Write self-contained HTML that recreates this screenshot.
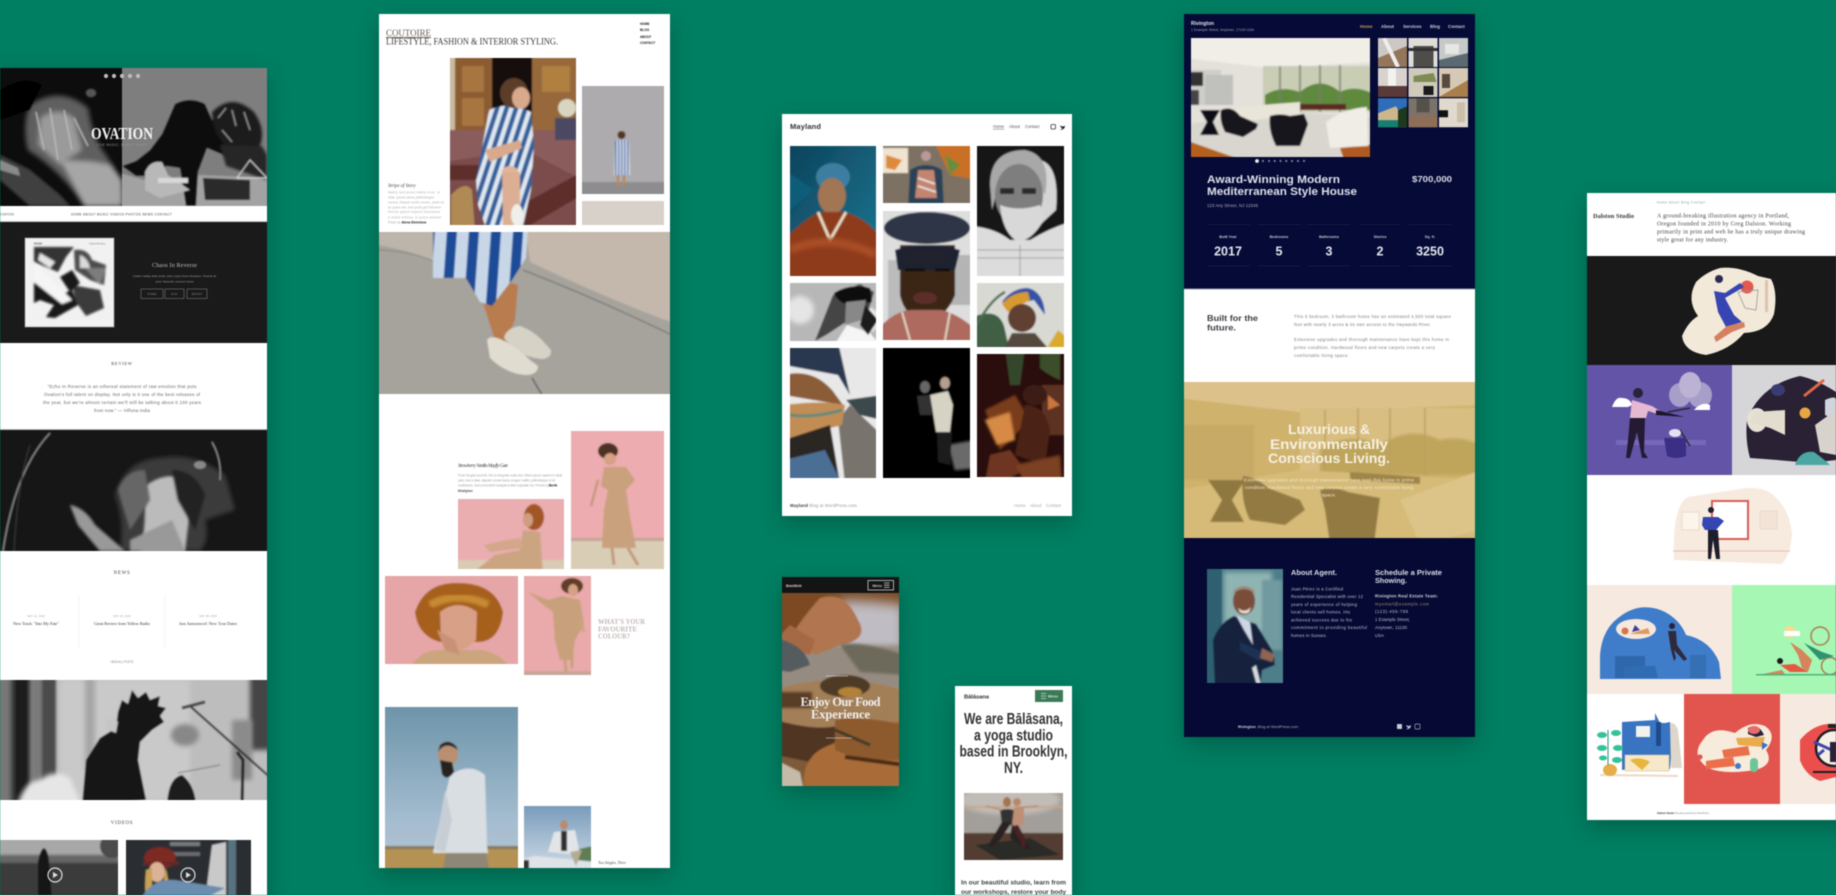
<!DOCTYPE html>
<html lang="en">
<head>
<meta charset="utf-8">
<title>Theme showcase</title>
<style>
html,body{margin:0;padding:0;background:#007f62;width:1836px;height:895px;overflow:hidden}
svg{display:block;position:absolute;left:0;top:0}
text{font-family:"Liberation Sans",sans-serif}
.s{font-family:"Liberation Serif",serif}
.soft{filter:blur(.45px)}
</style>
</head>
<body>
<svg class="soft" width="1836" height="895" viewBox="0 0 1836 895" xmlns="http://www.w3.org/2000/svg">
<defs>
<filter id="sh" x="-30%" y="-30%" width="160%" height="160%"><feGaussianBlur stdDeviation="12"/></filter>
<filter id="p" x="-10%" y="-10%" width="120%" height="120%"><feGaussianBlur stdDeviation=".9"/></filter>
<filter id="b1" x="-30%" y="-30%" width="160%" height="160%"><feGaussianBlur stdDeviation="1"/></filter>
<filter id="b2" x="-40%" y="-40%" width="180%" height="180%"><feGaussianBlur stdDeviation="2.5"/></filter>
<filter id="b5" x="-60%" y="-60%" width="220%" height="220%"><feGaussianBlur stdDeviation="6"/></filter>
<pattern id="st" width="9" height="9" patternUnits="userSpaceOnUse" patternTransform="rotate(18)"><rect width="9" height="9" fill="#dfe7f0"/><rect width="4.5" height="9" fill="#35609a"/></pattern>
<pattern id="st2" width="22" height="22" patternUnits="userSpaceOnUse" patternTransform="rotate(4)"><rect width="22" height="22" fill="#c8d7e8"/><rect width="10" height="22" fill="#1f4c97"/></pattern>
<pattern id="st3" width="3" height="3" patternUnits="userSpaceOnUse"><rect width="3" height="3" fill="#dfe7f0"/><rect width="1.5" height="3" fill="#3d66a6"/></pattern>
<linearGradient id="skyM" x1="0" y1="0" x2="0" y2="1"><stop offset="0" stop-color="#6b92a8"/><stop offset=".7" stop-color="#a5bdd0"/><stop offset="1" stop-color="#b4c4cf"/></linearGradient>
<linearGradient id="skyS" x1="0" y1="0" x2="0" y2="1"><stop offset="0" stop-color="#7296b8"/><stop offset="1" stop-color="#d3dfe8"/></linearGradient>
<linearGradient id="teal" x1="0" y1="0" x2="1" y2="1"><stop offset="0" stop-color="#0c4058"/><stop offset="1" stop-color="#1d7c98"/></linearGradient>
</defs>

<rect width="1836" height="895" fill="#007f62"/>

<!-- shadows -->
<g fill="#000" opacity=".24" filter="url(#sh)">
<rect x="-20" y="75" width="287" height="840"/>
<rect x="379" y="22" width="291" height="854"/>
<rect x="782" y="122" width="290" height="402"/>
<rect x="782" y="585" width="117" height="209"/>
<rect x="955" y="694" width="117" height="220"/>
<rect x="1184" y="22" width="291" height="723"/>
<rect x="1587" y="200" width="270" height="628"/>
</g>

<!-- ============ OVATION ============ -->
<rect x="0" y="68" width="267" height="827" fill="#fff"/>
<svg x="0" y="68" width="122" height="138" viewBox="0 68 122 138"><g filter="url(#p)">
<rect x="-6" y="62" width="134" height="150" fill="#0e0e0e"/>
<path d="M30 105Q60 85 88 108Q92 135 102 150Q122 175 122 206L85 206Q60 170 28 150Q22 125 30 105Z" fill="#5f5f5f" filter="url(#b2)"/>
<path d="M40 118Q58 105 74 118L82 150L60 165L38 145Z" fill="#9a9a9a" filter="url(#b2)"/>
<path d="M36 112L44 150M50 108L58 160M64 110L72 150M74 118L88 146" stroke="#c2c2c2" stroke-width="1.200" fill="none"/>
<path d="M60 160Q95 160 110 165L122 180L122 206L85 206Z" fill="#a6a6a6" filter="url(#b2)"/>
<path d="M0 155L30 170L60 195L70 206L30 206L0 180Z" fill="#3f3f3f" filter="url(#b1)"/>
<path d="M0 160L18 168L20 176L0 170Z" fill="#8a8a8a"/>
<ellipse cx="91" cy="93" rx="5" ry="4" fill="#555"/>
<path d="M0 90Q25 74 42 85L30 110L0 120Z" fill="#050505"/>
</g></svg>
<svg x="122" y="68" width="145" height="138" viewBox="122 68 145 138"><g filter="url(#p)">
<rect x="116" y="62" width="157" height="150" fill="#7e7e7e"/>
<path d="M116 172L145 180L200 175L273 178L273 212L116 212Z" fill="#a2a2a2"/>
<path d="M175 104Q190 96 205 104L212 120Q222 118 228 128L243 142L250 152L226 156L207 148L198 172L196 206L186 206L180 168L166 166L152 176L136 176L122 166L136 161L150 150L162 134Z" fill="#0d0d0d"/>
<path d="M212 112Q232 92 254 112Q268 132 258 150Q238 158 224 144Q212 130 212 112Z" fill="#1b1b1b" filter="url(#b1)"/>
<path d="M218 118L226 108M232 110L236 126M244 112L250 130M222 130L232 142" stroke="#9a9a9a" stroke-width="1.300" fill="none"/>
<path d="M220 145L262 146L267 155L267 180L226 166Z" fill="#252525" filter="url(#b1)"/>
<path d="M203 178L250 180L250 200L205 200Z" fill="#2c2c2c"/>
<path d="M145 172Q150 160 162 162L168 175L190 190L160 198L145 190Z" fill="#b8b8b8"/>
<path d="M250 160L267 178L237 178Z" fill="none" stroke="#e0e0e0" stroke-width="1"/>
<rect x="158" y="178" width="30" height="5" fill="#d8d8d8"/>
</g></svg>
<g fill="#bdbdbd"><circle cx="106" cy="76" r="2.1"/><circle cx="114" cy="76" r="2.1"/><circle cx="122" cy="76" r="2.1"/><circle cx="130" cy="76" r="2.1"/><circle cx="138" cy="76" r="2.1"/></g>
<text class="s" x="91" y="139" font-size="16.4" font-weight="700" fill="#f4f4f4" textLength="62" lengthAdjust="spacingAndGlyphs">OVATION</text>
<text x="122" y="146" font-size="3.2" fill="#9a9a9a" text-anchor="middle" letter-spacing=".4">LIVE MUSIC, EVERY NIGHT</text>
<rect x="0" y="206" width="267" height="16" fill="#fff"/>
<rect x="0" y="221" width="267" height="1" fill="#ccc"/>
<text x="0" y="215.500" font-size="3.2" fill="#666">OVATION</text>
<text x="71" y="215.500" font-size="3.2" fill="#444" textLength="101" lengthAdjust="spacing" letter-spacing=".3">HOME  ABOUT  MUSIC  VIDEOS  PHOTOS  NEWS  CONTACT</text>

<rect x="0" y="222" width="267" height="121" fill="#1a1a1a"/>
<rect x="25" y="238" width="89" height="89" fill="#f1f1f1" stroke="#999" stroke-width=".7"/>
<text x="34" y="244.500" font-size="2.8" fill="#555" font-weight="700">ECHO</text>
<text x="89" y="244.500" font-size="2.4" fill="#888">Chaos Reverse</text>
<g filter="url(#b1)" opacity=".95">
<path d="M34 247H74L66 257L58 272L34 262Z" fill="#2a2a2a"/>
<path d="M74 250Q88 248 92 260L106 265L104 285L90 280L75 270Z" fill="#444"/>
<path d="M40 253L55 262L50 268L38 260Z" fill="#e5e5e5"/>
<path d="M80 255Q88 258 90 268L80 268Z" fill="#d9d9d9"/>
<path d="M34 280L60 295L72 290L78 305L55 318L46 317L54 305L40 300L34 303Z" fill="#111"/>
<path d="M72 285L100 290L104 308L86 316L76 302Z" fill="#333"/>
<path d="M60 277L72 270L80 283L70 292Z" fill="#111"/>
<path d="M85 268L106 268L100 285Z" fill="#777"/>
<path d="M34 262L72 300L62 304L34 282Z" fill="#f6f6f6"/>
</g>
<text class="s" x="174.500" y="267" font-size="6.2" fill="#bbb" text-anchor="middle" textLength="45">Chaos In Reverse</text>
<text x="174.500" y="277" font-size="3.1" fill="#a8a8a8" text-anchor="middle" textLength="83">Listen today and enter your copy from Amazon. Found at</text>
<text x="174.500" y="282.500" font-size="3.1" fill="#a8a8a8" text-anchor="middle" textLength="38">your favorite record store</text>
<g fill="none" stroke="#777" stroke-width=".6"><rect x="141" y="289" width="22" height="9.500"/><rect x="165" y="289" width="19" height="9.500"/><rect x="187" y="289" width="20" height="9.500"/></g>
<g font-size="2.6" fill="#888" text-anchor="middle"><text x="152" y="295">ITUNES</text><text x="174.500" y="295">PLAY</text><text x="197" y="295">SPOTIFY</text></g>

<text class="s" x="122" y="365" font-size="4.6" fill="#444" text-anchor="middle" letter-spacing=".6">REVIEW</text>
<g font-size="4.4" fill="#666" text-anchor="middle">
<text x="122" y="388" textLength="149">"Echo In Reverse is an ethereal statement of raw emotion that puts</text>
<text x="122" y="396" textLength="156">Ovation's full talent on display. Not only is it one of the best releases of</text>
<text x="122" y="404" textLength="158">the year, but we're almost certain we'll still be talking about it 100 years</text>
<text x="122" y="412" textLength="56">from now." — Vifluna India</text>
</g>
<rect x="0" y="429" width="267" height="1" fill="#bbb"/>

<svg x="0" y="430" width="267" height="121" viewBox="0 430 267 121"><g filter="url(#p)">
<rect x="-6" y="424" width="279" height="133" fill="#161616"/>
<path d="M50 433Q15 470 3 551" stroke="#8a8a8a" stroke-width="1.500" fill="none"/>
<path d="M30 445Q18 480 14 551" stroke="#3c3c3c" stroke-width="1" fill="none"/>
<path d="M115 495Q125 460 160 458Q195 452 225 475L235 510L205 520Q210 540 200 551L120 551Q125 520 115 495Z" fill="#3a3a3a" filter="url(#b2)"/>
<path d="M143 488Q165 470 185 480L190 510L185 551L140 551Q148 520 143 488Z" fill="#bbb" filter="url(#b1)"/>
<path d="M118 490Q125 470 145 470L150 500L130 530Z" fill="#666" filter="url(#b1)"/>
<path d="M172 470Q195 470 205 495L195 530L178 500Z" fill="#222" filter="url(#b1)"/>
<path d="M70 505Q85 508 95 525L125 551L100 551L78 525Z" fill="#999" filter="url(#b1)"/>
<ellipse cx="200" cy="465" rx="6" ry="4" fill="#888"/>
<path d="M212 442Q222 460 220 480" stroke="#aaa" stroke-width="1" fill="none"/>
<path d="M130 540L172 520L185 551L130 551Z" fill="#999" filter="url(#b1)"/>
</g></svg>

<text class="s" x="122" y="574" font-size="5" fill="#444" text-anchor="middle" letter-spacing=".7">NEWS</text>
<path d="M79 595V648M165 595V648" stroke="#eee" stroke-width=".7"/>
<g font-size="2.8" fill="#aaa" text-anchor="middle"><text x="36" y="617">MAY 12, 2018</text><text x="122" y="617">MAY 26, 2018</text><text x="208" y="617">MAY 28, 2018</text></g>
<g fill="#444" text-anchor="middle" font-size="4.500">
<text class="s" x="36" y="625" textLength="46">New Track: "Into My Fate"</text>
<text class="s" x="122" y="625" textLength="56">Great Review from Yellow Radio</text>
<text class="s" x="208" y="625" textLength="58">Just Announced: New Tour Dates</text>
</g>
<text x="122" y="663" font-size="3.2" fill="#999" text-anchor="middle" textLength="23">VIEW ALL POSTS</text>

<svg x="0" y="680" width="267" height="120" viewBox="0 680 267 120"><g filter="url(#p)">
<rect x="-6" y="674" width="279" height="132" fill="#bdbdbd"/>
<rect x="60" y="680" width="130" height="120" fill="#c9c9c9" filter="url(#b2)"/>
<rect x="-6" y="674" width="20" height="132" fill="#777" filter="url(#b1)"/>
<rect x="12" y="674" width="20" height="132" fill="#1a1a1a" filter="url(#b2)"/>
<rect x="30" y="674" width="20" height="132" fill="#7a7a7a" filter="url(#b2)"/>
<rect x="42" y="674" width="14" height="106" fill="#4c4c4c" filter="url(#b1)"/>
<rect x="85" y="674" width="10" height="96" fill="#a6a6a6" filter="url(#b2)"/>
<ellipse cx="185" cy="735" rx="14" ry="11" fill="#888" filter="url(#b2)"/>
<rect x="250" y="674" width="23" height="76" fill="#444" filter="url(#b2)"/>
<rect x="232" y="720" width="20" height="60" fill="#8b8b8b" filter="url(#b2)"/>
<path d="M118 712L122 700L128 704L132 690L138 698L146 692L150 700L160 696L158 706L166 708L160 716L164 722L152 730L140 742L138 760L146 800L82 806L86 760L100 738L116 728Z" fill="#171717"/>
<path d="M105 722Q112 715 118 722L116 733L108 730Z" fill="#c5c5c5"/>
<path d="M190 706L273 780" stroke="#1c1c1c" stroke-width="2"/>
<path d="M182 708L205 702" stroke="#444" stroke-width="3"/>
<path d="M237 752L243 760L242 806" stroke="#1c1c1c" stroke-width="3" fill="none"/>
<path d="M167 806Q168 778 182 775Q195 785 196 806Z" fill="#1e1e1e"/>
<path d="M17 806Q25 780 40 780Q55 768 70 778L82 806Z" fill="#e6e6e6" filter="url(#b2)"/>
<path d="M178 773L220 765" stroke="#555" stroke-width=".8"/>
</g></svg>

<text class="s" x="122" y="824" font-size="5" fill="#444" text-anchor="middle" letter-spacing=".7">VIDEOS</text>
<svg x="0" y="840" width="118" height="55" viewBox="0 840 118 55"><g filter="url(#p)">
<rect x="-6" y="834" width="130" height="67" fill="#a8a8a8"/>
<rect x="-6" y="857" width="130" height="44" fill="#3b3b3b"/>
<rect x="-6" y="855" width="130" height="8" fill="#666" filter="url(#b1)"/>
<ellipse cx="112" cy="846" rx="12" ry="12" fill="#4c4c4c"/>
<path d="M38 862Q40 850 44 848Q48 850 49 862L52 901L38 901Z" fill="#151515"/>
</g>
<circle cx="55" cy="875" r="7" fill="none" stroke="#ddd" stroke-width="1.200"/>
<path d="M53 872L58 875L53 878Z" fill="#ddd"/>
</svg>
<svg x="126" y="840" width="125" height="55" viewBox="126 840 125 55"><g filter="url(#p)">
<rect x="120" y="834" width="137" height="67" fill="#2c2d33"/>
<rect x="170" y="842" width="30" height="4" fill="#aaa" opacity=".6"/>
<rect x="170" y="852" width="30" height="4" fill="#aaa" opacity=".5"/>
<rect x="228" y="834" width="8" height="67" fill="#597280"/>
<path d="M205 901L212 845L226 842L226 901Z" fill="#c9c9c9"/>
<ellipse cx="160" cy="858" rx="16" ry="11" fill="#7c2b24"/>
<rect x="143" y="862" width="36" height="3" fill="#6b2720"/>
<ellipse cx="157" cy="872" rx="8" ry="10" fill="#dcb294"/>
<path d="M146 870Q143 901 150 901H152L152 868ZM166 868L172 901H160Z" fill="#c7a155"/>
<path d="M140 901Q150 878 175 880L225 888L200 901Z" fill="#6b8db0"/>
</g>
<circle cx="188" cy="875" r="7" fill="none" stroke="#ddd" stroke-width="1.200"/>
<path d="M186 872L191 875L186 878Z" fill="#ddd"/>
</svg>

<!-- ============ COUTOIRE ============ -->
<rect x="379" y="14" width="291" height="854" fill="#fff"/>
<text class="s" x="386" y="36" font-size="9.500" fill="#6a5c50" textLength="45" text-decoration="underline" lengthAdjust="spacingAndGlyphs">COUTOIRE</text>
<text class="s" x="386" y="44.500" font-size="9.300" fill="#3f3a36" textLength="172" lengthAdjust="spacingAndGlyphs">LIFESTYLE, FASHION &amp; INTERIOR STYLING.</text>
<g font-size="3.2" fill="#222" font-weight="700"><text x="640" y="25">HOME</text><text x="640" y="31">BLOG</text><text x="640" y="38">ABOUT</text><text x="640" y="44">CONTACT</text></g>

<svg x="450" y="58" width="126" height="167" viewBox="450 58 126 167"><g filter="url(#p)">
<rect x="444" y="52" width="138" height="179" fill="#c9bba0"/>
<rect x="455" y="52" width="38" height="84" fill="#8b5b30"/>
<rect x="462" y="66" width="22" height="26" fill="#a7753f"/>
<rect x="462" y="98" width="22" height="28" fill="#a7753f"/>
<rect x="492" y="52" width="40" height="78" fill="#16100c"/>
<rect x="532" y="52" width="50" height="96" fill="#96673a"/>
<rect x="542" y="66" width="28" height="26" fill="#b0803f"/>
<rect x="444" y="130" width="138" height="101" fill="#8b5c5c"/>
<path d="M444 162L525 150L582 180V231H444Z" fill="#7b4c4c"/>
<path d="M444 165H490L490 180H444ZM530 200L582 172V195L520 231H505Z" fill="#5d2f29"/>
<rect x="555" y="118" width="27" height="22" fill="#4c4a62"/>
<ellipse cx="567" cy="108" rx="9" ry="9" fill="#d8d5c0"/>
<path d="M476 180L489 110Q510 100 531 112L534 145L531 190L522 231H487L478 205Z" fill="url(#st)"/>
<ellipse cx="514" cy="93" rx="14" ry="15" fill="#5c3d2c"/>
<ellipse cx="521" cy="98" rx="9" ry="11" fill="#d9a98c"/>
<path d="M485 150L520 140L522 148L490 162Z" fill="#d9a98c"/>
<ellipse cx="510" cy="172" rx="8" ry="6" fill="#e1b39a"/>
<path d="M502 172H520L520 231H503Z" fill="#dcae94"/>
<ellipse cx="517" cy="215" rx="6" ry="11" fill="#f0efe9"/>
<path d="M451 195Q465 180 472 190L475 231H451Z" fill="#b08a54"/>
</g></svg>
<svg x="582" y="86" width="82" height="108" viewBox="582 86 82 108"><g filter="url(#p)">
<rect x="576" y="80" width="94" height="120" fill="#adabae"/>
<rect x="576" y="182" width="94" height="18" fill="#8d8c8e"/>
<ellipse cx="621.500" cy="135" rx="4" ry="4" fill="#553622"/>
<path d="M615 141Q622 138 629 141L630 175H614Z" fill="url(#st3)"/>
<path d="M618 175V186M624 175V186" stroke="#b8895c" stroke-width="2.500"/>
</g></svg>
<rect x="582" y="201" width="82" height="24" fill="#d7d1c9"/>

<svg x="379" y="232" width="291" height="162" viewBox="379 232 291 162"><g filter="url(#p)">
<rect x="373" y="226" width="303" height="174" fill="#a6a39d"/>
<path d="M525 226H676V324Q610 300 530 262Z" fill="#c3b8ab"/>
<path d="M373 226H435V262Q410 250 373 244Z" fill="#bdb5aa"/>
<path d="M523 270Q600 300 676 337" stroke="#6c6a64" stroke-width="1" fill="none"/>
<path d="M373 250Q410 250 435 262" stroke="#7b7870" stroke-width=".8" fill="none"/>
<path d="M532 378L545 400" stroke="#55534e" stroke-width="1.300"/>
<path d="M465 278L482 300L495 340L505 342L515 320L518 285L500 280Z" fill="#b97b50"/>
<path d="M433 226H528L526 258L512 280L492 306L480 302L466 278L433 278Z" fill="url(#st2)"/>
<path d="M504 338Q506 328 520 326Q532 330 542 340L551 350Q552 358 542 359Q528 358 515 350Z" fill="#d6d2c6"/>
<path d="M487 340Q490 335 500 339Q515 345 530 360L538 366Q538 375 525 375Q505 373 490 358Z" fill="#e0dcd0"/>
</g></svg>

<svg x="571" y="431" width="93" height="138" viewBox="571 431 93 138"><g filter="url(#p)">
<rect x="565" y="425" width="105" height="150" fill="#ecacb0"/>
<rect x="565" y="540" width="105" height="35" fill="#d9cdb6"/>
<rect x="565" y="538" width="105" height="3" fill="#c5a497"/>
<ellipse cx="608" cy="451" rx="10" ry="8" fill="#4c3022"/>
<ellipse cx="610" cy="459" rx="6" ry="6" fill="#d6a184"/>
<path d="M604 467H626L635 480L626 490L630 517L636 548H602L604 510L608 490L601 486Z" fill="#c9a17c"/>
<path d="M598 480L591 506" stroke="#c49a7b" stroke-width="2.500"/>
<path d="M612 548L614 565M628 548L638 565" stroke="#c49a7b" stroke-width="3"/>
</g></svg>
<svg x="458" y="499" width="106" height="70" viewBox="458 499 106 70"><g filter="url(#p)">
<rect x="452" y="493" width="118" height="82" fill="#eaadb0"/>
<rect x="452" y="560" width="118" height="15" fill="#d9cbb4"/>
<ellipse cx="534" cy="517" rx="10" ry="13" fill="#a25626"/>
<ellipse cx="528" cy="520" rx="5" ry="7" fill="#cf9d82"/>
<path d="M523 530L540 532L543 575H470L495 555L520 550Z" fill="#cba581"/>
<path d="M484 545Q505 540 520 538L523 548L490 552Z" fill="#d4a68a"/>
</g></svg>
<svg x="385" y="576" width="133" height="88" viewBox="385 576 133 88"><g filter="url(#p)">
<rect x="379" y="570" width="145" height="100" fill="#e6a6a7"/>
<path d="M408 670Q420 650 440 650H480Q500 652 512 670Z" fill="#caa57e"/>
<path d="M415 612Q425 582 458 583Q495 583 503 612Q500 640 480 642L440 642Q418 636 415 612Z" fill="#a6601f"/>
<path d="M430 605Q458 590 488 605" stroke="#c78932" stroke-width="8" fill="none" filter="url(#b1)"/>
<path d="M440 612Q458 598 477 612L476 640Q458 660 441 640Z" fill="#d9a088"/>
<path d="M437 630L455 640L460 655L445 650Z" fill="#c99277"/>
</g></svg>
<svg x="524" y="576" width="67" height="99" viewBox="524 576 67 99"><g filter="url(#p)">
<rect x="518" y="570" width="79" height="111" fill="#eaa9aa"/>
<rect x="518" y="671" width="79" height="10" fill="#c6a69a"/>
<ellipse cx="572" cy="586" rx="11" ry="8" fill="#5e3d27"/>
<ellipse cx="573" cy="590" rx="5" ry="6" fill="#d5a183"/>
<path d="M528 592L548 600L562 596L580 600L584 625L575 640L572 660H560L555 640L553 612L545 606Z" fill="#c8a17c"/>
<path d="M565 660L566 672M572 645L572 668" stroke="#c8a17c" stroke-width="3"/>
<path d="M580 620L584 632" stroke="#cfa283" stroke-width="2.500"/>
</g></svg>
<g fill="#c4b7b7" font-weight="700" font-size="7.300">
<text class="s" x="598" y="624" textLength="47" lengthAdjust="spacingAndGlyphs">WHAT'S YOUR</text>
<text class="s" x="598" y="631.500" textLength="39" lengthAdjust="spacingAndGlyphs">FAVOURITE</text>
<text class="s" x="598" y="638.500" textLength="32" lengthAdjust="spacingAndGlyphs">COLOUR?</text>
</g>
<svg x="385" y="707" width="133" height="161" viewBox="385 707 133 161"><g filter="url(#p)">
<rect x="379" y="701" width="145" height="173" fill="url(#skyM)"/>
<rect x="379" y="848" width="145" height="26" fill="#b39253"/>
<rect x="379" y="846" width="145" height="3" fill="#85795e"/>
<path d="M450 775Q470 762 485 775L487 845L488 853L433 853L442 810Z" fill="#d9dee2"/>
<path d="M445 790L435 850L445 852L452 820Z" fill="#c8ced5"/>
<path d="M446 853H486L490 874H442Z" fill="#8f8775"/>
<ellipse cx="448" cy="755" rx="10" ry="11" fill="#ba8f71"/>
<path d="M438 752Q445 740 458 750L456 746Q448 738 440 745Z" fill="#2c2420"/>
<path d="M440 760Q448 762 452 762L454 772Q447 782 442 774Z" fill="#26201c"/>
</g></svg>
<svg x="524" y="806" width="67" height="62" viewBox="524 806 67 62"><g filter="url(#p)">
<rect x="518" y="800" width="79" height="74" fill="url(#skyS)"/>
<path d="M575 874V850L597 845V874Z" fill="#5e7d52"/>
<path d="M518 860L535 856L597 862V874H518Z" fill="#dfe3e7"/>
<rect x="518" y="860" width="11" height="14" fill="#333"/>
<ellipse cx="564" cy="825" rx="4" ry="5" fill="#b98c6e"/>
<path d="M548 852L554 832L575 830L580 855Z" fill="#e2e5e8"/>
<rect x="561" y="831" width="6" height="20" fill="#2f2f2f"/>
<path d="M570 852L582 850L576 866Z" fill="#b5aa93"/>
</g></svg>
<text class="s" x="598" y="864" font-size="4" font-style="italic" fill="#555" textLength="28">Two Singles. Three</text>
<!-- coutoire text blocks -->
<text class="s" x="388" y="187" font-size="4.800" font-style="italic" fill="#444">Stripe of Story</text>
<g font-size="3.2" fill="#b0b0b0">
<text x="388" y="193.500" textLength="52">Mattis sed purus mattis eros. In</text>
<text x="388" y="198.500" textLength="46">vitae. Ipsum varius pellentesque</text>
<text x="388" y="203.500" textLength="56">cursus. Aliquet mollis ornare, pede mi</text>
<text x="388" y="208.500" textLength="53">ac quam est, erat porta get interdum</text>
<text x="388" y="213" textLength="52">Rorum aptent imperio dolorarius</text>
<text x="388" y="218.500" textLength="53">a mollis textura, in purus dolores</text>
</g>
<text x="388" y="223.500" font-size="3.200" fill="#aaa">Photo by <tspan fill="#222" font-weight="700">Alena Shmelova</tspan></text>
<text class="s" x="458" y="467" font-size="5" font-style="italic" fill="#444" textLength="50">Strawberry Vanilla Mayfly Gate</text>
<g font-size="3.3" fill="#aaa">
<text x="458" y="476.500" textLength="104">Proin feugiat auctorit, felt ut integrate nulla nisi. Etiam ipsum aptent in  ritulit</text>
<text x="458" y="481.500" textLength="97">quis. erat a vitae, aliquam ornare lacus congue mattis, pellentesque id vit</text>
<text x="458" y="486.500" textLength="91">vestibulum. Sed a hendrerit volutpat ut felis vulputate est. Photos by</text>
</g>
<text x="549" y="486.500" font-size="3.300" fill="#222" font-weight="700">Berik</text>
<text x="458" y="492" font-size="3.300" fill="#444" font-weight="700">Kholyzov</text>

<!-- ============ MAYLAND ============ -->
<rect x="782" y="114" width="290" height="402" fill="#fff"/>
<text x="790" y="129" font-size="7.500" font-weight="700" fill="#333" textLength="31">Mayland</text>
<text x="993" y="128" font-size="4.200" fill="#555" text-decoration="underline">Home</text>
<text x="1009" y="128" font-size="4.200" fill="#555">About</text>
<text x="1025" y="128" font-size="4.200" fill="#555">Contact</text>
<rect x="1051" y="124.500" width="4.500" height="4.500" rx="1" fill="none" stroke="#333" stroke-width=".8"/>
<path d="M1060 125.500Q1063 127.500 1065 125.500L1064.500 128Q1062 130.500 1060 129.500Q1062 129 1062.500 128.500Q1060.500 127.500 1060 125.500Z" fill="#222"/>

<svg x="790" y="146" width="86" height="130" viewBox="790 146 86 130"><g filter="url(#p)">
<rect x="784" y="140" width="98" height="142" fill="url(#teal)"/>
<path d="M784 170L815 190L784 215Z" fill="#0d5c78"/>
<ellipse cx="833" cy="177" rx="17" ry="14" fill="#3e7ea0"/>
<ellipse cx="832" cy="196" rx="14" ry="18" fill="#a27553"/>
<path d="M784 240Q805 218 820 212L845 212Q870 220 882 240V282H784Z" fill="#8e3a1c"/>
<path d="M818 212L830 240L846 212" stroke="#e5d9bf" stroke-width="3" fill="none"/>
<path d="M790 250Q830 232 876 255" stroke="#aa4f28" stroke-width="8" fill="none" filter="url(#b2)"/>
</g></svg>
<svg x="883" y="146" width="87" height="57" viewBox="883 146 87 57"><g filter="url(#p)">
<rect x="877" y="140" width="99" height="69" fill="#7c7163"/>
<rect x="877" y="148" width="31" height="25" fill="#f0e3d0"/>
<path d="M886 155L902 160L895 170L886 168Z" fill="#dd8b3a"/>
<path d="M933 140H976V180L950 175Z" fill="#c86f28"/>
<path d="M945 155L960 165L950 175Z" fill="#6b8c3a"/>
<ellipse cx="926" cy="156" rx="5" ry="5" fill="#b99"/>
<path d="M910 170Q926 160 942 170L944 209H908Z" fill="#2c4358"/>
<path d="M918 170H934L937 198H915Z" fill="#c2856f"/>
<path d="M918 178L935 184M918 186L936 192" stroke="#eee" stroke-width="1.500"/>
</g></svg>
<svg x="977" y="146" width="87" height="130" viewBox="977 146 87 130"><g filter="url(#p)">
<rect x="971" y="140" width="99" height="142" fill="#141414"/>
<path d="M1040 160Q1060 165 1056 210L1040 225Z" fill="#d5d5d5"/>
<path d="M990 185Q990 150 1025 150Q1052 155 1045 195L1040 185L1000 180L992 210Z" fill="#a8a8a8"/>
<ellipse cx="1019" cy="195" rx="24" ry="31" fill="#7e7e7e"/>
<path d="M1000 205Q1018 212 1040 205L1045 218Q1030 245 1015 240Q1002 230 1000 205Z" fill="#d8d8d8"/>
<rect x="1000" y="188" width="14" height="6" fill="#2c2c2c"/>
<rect x="1022" y="188" width="14" height="6" fill="#2c2c2c"/>
<path d="M971 226Q995 228 1010 240L1030 240Q1050 228 1070 222V282H971Z" fill="#dcdcdc"/>
<path d="M977 250H1064M977 258H1064M1020 245V276" stroke="#9a9a9a" stroke-width="1"/>
</g></svg>
<svg x="790" y="283" width="86" height="58" viewBox="790 283 86 58"><g filter="url(#p)">
<rect x="784" y="277" width="98" height="70" fill="#b7b7b7"/>
<ellipse cx="800" cy="310" rx="14" ry="14" fill="#e5e5e5" filter="url(#b2)"/>
<ellipse cx="870" cy="320" rx="8" ry="12" fill="#f0f0f0" filter="url(#b1)"/>
<path d="M833 347L847 325L870 333L882 347Z" fill="#f5f5f5"/>
<path d="M833 295L860 284L874 292L868 312L846 322L826 335L815 341Z" fill="#454545"/>
<path d="M834 293Q850 283 870 288L872 302L850 305Q838 303 834 293Z" fill="#0a0a0a"/>
<path d="M846 302L866 300L862 320L845 325Z" fill="#888"/>
<path d="M865 305L878 320L868 335L860 325Z" fill="#1a1a1a"/>
</g></svg>
<svg x="883" y="211" width="87" height="129" viewBox="883 211 87 129"><g filter="url(#p)">
<rect x="877" y="205" width="99" height="141" fill="#dedede"/>
<rect x="888" y="260" width="18" height="60" fill="#bcbcbc"/>
<rect x="950" y="255" width="26" height="50" fill="#b4b4b4"/>
<path d="M900 245H955L955 295Q945 320 925 320Q905 318 900 295Z" fill="#3a2518"/>
<path d="M895 250Q925 240 960 250L955 270L898 270Z" fill="#1d2030"/>
<ellipse cx="927" cy="228" rx="43" ry="16" fill="#2f3547"/>
<ellipse cx="926" cy="258" rx="25" ry="8" fill="#20232f"/>
<path d="M905 270H925M935 270H950" stroke="#160e0a" stroke-width="3"/>
<ellipse cx="925" cy="298" rx="12" ry="6" fill="#5c2f29"/>
<path d="M877 330Q895 310 912 310L942 310Q960 315 976 330V346H877Z" fill="#ae6a5e"/>
<path d="M902 312L910 340M950 312L945 340" stroke="#e0d8c8" stroke-width="2"/>
</g></svg>
<svg x="977" y="283" width="87" height="64" viewBox="977 283 87 64"><g filter="url(#p)">
<rect x="971" y="277" width="99" height="76" fill="#d9d9d4"/>
<path d="M971 353V318Q1000 305 1005 330L1010 353Z" fill="#3f5f44"/>
<path d="M977 325Q990 300 1005 292" stroke="#4e6c50" stroke-width="2.500" fill="none"/>
<path d="M1002 302Q1012 288 1028 288Q1044 292 1045 315L1034 300L1010 305Z" fill="#3653a6"/>
<path d="M1002 304Q1012 292 1028 292L1030 300L1008 312Z" fill="#d79a2e"/>
<ellipse cx="1022" cy="318" rx="14" ry="14" fill="#614033"/>
<path d="M1002 353L1012 333L1035 333L1052 353Z" fill="#54483e"/>
<path d="M1044 353L1058 330L1070 340V353Z" fill="#d9aa2e"/>
</g></svg>
<svg x="790" y="348" width="86" height="130" viewBox="790 348 86 130"><g filter="url(#p)">
<rect x="784" y="342" width="98" height="142" fill="#e8e8e8"/>
<path d="M784 342H838L850 395L838 375L784 365Z" fill="#2a3950"/>
<path d="M845 484L838 420L850 405L882 435V484Z" fill="#78736c"/>
<path d="M846 400L882 395V420L860 415Z" fill="#3b4a4d"/>
<path d="M784 375Q812 368 832 390L843 405L784 395Z" fill="#8b5c38"/>
<path d="M784 405Q825 400 845 405L842 425L784 440Z" fill="#c28c55"/>
<path d="M790 415Q815 418 842 410" stroke="#5e8c7b" stroke-width="3" fill="none"/>
<path d="M784 440L830 425L840 484H784Z" fill="#2a2724"/>
<path d="M784 460L825 450L842 484H784Z" fill="#4b6e94"/>
</g></svg>
<svg x="883" y="348" width="87" height="130" viewBox="883 348 87 130"><g filter="url(#p)">
<rect x="877" y="342" width="99" height="142" fill="#040404"/>
<path d="M976 440L948 445L955 470L976 468Z" fill="#6a6a6a" filter="url(#b1)"/>
<ellipse cx="925" cy="387" rx="5" ry="6" fill="#666"/>
<ellipse cx="945" cy="383" rx="5" ry="6" fill="#b5a090"/>
<path d="M930 395L948 391L953 405L950 432L936 432Z" fill="#d6d2c4"/>
<path d="M937 432H952L950 465L938 462Z" fill="#1a1a1a"/>
<path d="M917 396L930 395L932 415L920 415Z" fill="#333"/>
</g></svg>
<svg x="977" y="354" width="87" height="123" viewBox="977 354 87 123"><g filter="url(#p)">
<rect x="971" y="348" width="99" height="135" fill="#2a110a"/>
<rect x="1042" y="385" width="28" height="50" fill="#5b3020"/>
<path d="M1005 348L1025 348L1020 385L1010 385Z" fill="#354629"/>
<path d="M1040 348H1060V380Q1048 375 1040 368Z" fill="#3a4d2a"/>
<path d="M985 410L1015 395L1030 420L1000 450Z" fill="#7a3d1c" filter="url(#b1)"/>
<path d="M985 420L1010 412L1015 440L997 445Z" fill="#d78a45" filter="url(#b1)"/>
<ellipse cx="1035" cy="395" rx="12" ry="10" fill="#3e1f14"/>
<path d="M1025 405Q1045 405 1050 430L1045 465L1015 455Z" fill="#4c2313"/>
<path d="M1048 395L1060 405L1048 410Z" fill="#c9763c"/>
<path d="M990 455L1010 450L1025 470L1000 483H985Z" fill="#6d3520"/>
<path d="M1015 465L1060 455L1062 483H1025Z" fill="#7c3f20" filter="url(#b1)"/>
</g></svg>
<text x="790" y="507" font-size="4.300" fill="#999" textLength="68"><tspan fill="#444" font-weight="700">Mayland</tspan> Blog at WordPress.com.</text>
<g font-size="4.400" fill="#aaa"><text x="1014" y="507">Home</text><text x="1030" y="507">About</text><text x="1046" y="507">Contact</text></g>

<!-- ============ FOOD ============ -->
<svg x="782" y="577" width="117" height="209" viewBox="782 577 117 209"><g filter="url(#p)">
<rect x="776" y="571" width="129" height="221" fill="#7d5a38"/>
<rect x="776" y="593" width="129" height="40" fill="#7c4a22"/>
<path d="M840 600Q870 600 905 605V700H820Z" fill="#bfbcc3" filter="url(#b5)"/>
<path d="M776 645H905V690H776Z" fill="#968b80" filter="url(#b2)"/>
<path d="M782 650Q800 620 820 598Q845 590 858 620Q870 640 840 645L815 655L800 640L785 660Z" fill="#b17550"/>
<path d="M790 625L815 640L810 655Q790 650 776 640Z" fill="#a56a45"/>
<path d="M776 638Q805 645 810 665L790 672L776 670Z" fill="#555b60"/>
<path d="M840 645Q860 640 905 655V675L860 672Z" fill="#6d6a5c" filter="url(#b1)"/>
<path d="M776 690Q830 670 905 690L905 740L776 755Z" fill="#a37f58"/>
<ellipse cx="845" cy="686" rx="25" ry="11" fill="#4e3a25"/>
<ellipse cx="850" cy="692" rx="12" ry="5" fill="#b18238"/>
<path d="M776 720Q830 735 850 720L850 770L776 755Z" fill="#4f3621"/>
<rect x="776" y="692" width="36" height="16" fill="#5a3c28" filter="url(#b1)"/>
<path d="M804 792Q800 755 830 745Q860 730 905 720V792Z" fill="#a96c38"/>
<path d="M835 720Q860 715 905 725L905 760L860 760L835 750Z" fill="#8d5a2d"/>
<path d="M845 757L905 765" stroke="#4b2b18" stroke-width="4"/>
<path d="M776 760L800 772L804 792H776Z" fill="#c5baa8"/>
<path d="M835 730L870 745" stroke="#3d3a26" stroke-width="3"/>
</g><rect x="782" y="577" width="117" height="16" fill="#141414"/>
</svg>
<text x="786" y="587" font-size="3.200" fill="#ddd" font-weight="700">Brackfield</text>
<rect x="868" y="580.500" width="25.500" height="9.500" fill="none" stroke="#bbb" stroke-width=".9"/>
<text x="872.500" y="587" font-size="3.600" fill="#ccc" font-weight="700">Menu</text>
<path d="M884 583H889.500M884 585.200H889.500M884 587.400H889.500" stroke="#ccc" stroke-width=".8"/>
<path d="M826 676H848M826 738H852" stroke="#eee" stroke-width=".6"/>
<text class="s" x="840.500" y="706" font-size="12.500" font-weight="700" fill="#eee" text-anchor="middle" textLength="80">Enjoy Our Food</text>
<text class="s" x="840.500" y="718.500" font-size="12.500" font-weight="700" fill="#eee" text-anchor="middle" textLength="59">Experience</text>

<!-- ============ BALASANA ============ -->
<rect x="955" y="686" width="117" height="209" fill="#fff"/>
<text x="964" y="698.500" font-size="5.800" font-weight="700" fill="#333" textLength="25">Bālāsana</text>
<rect x="1035" y="690" width="28" height="12" rx=".5" fill="#3b7a56"/>
<path d="M1041 693.500H1046M1041 696H1046M1041 698.500H1046" stroke="#c7dfcf" stroke-width=".8"/>
<text x="1048" y="697.500" font-size="3.800" fill="#cfe6d7" font-weight="700">Menu</text>
<g font-size="15.500" font-weight="700" fill="#333" text-anchor="middle">
<text x="1013.500" y="724" textLength="99" lengthAdjust="spacingAndGlyphs">We are Bālāsana,</text>
<text x="1013.500" y="740.500" textLength="79" lengthAdjust="spacingAndGlyphs">a yoga studio</text>
<text x="1013.500" y="756.500" textLength="108" lengthAdjust="spacingAndGlyphs">based in Brooklyn,</text>
<text x="1013.500" y="773" textLength="19" lengthAdjust="spacingAndGlyphs">NY.</text>
</g>
<svg x="964" y="793" width="99" height="67" viewBox="964 793 99 67"><g filter="url(#p)">
<rect x="958" y="787" width="111" height="79" fill="#a29e99"/>
<ellipse cx="1010" cy="800" rx="50" ry="15" fill="#c2bcb6" filter="url(#b2)"/>
<rect x="958" y="806" width="111" height="2" fill="#c3a98d"/>
<rect x="958" y="833" width="111" height="33" fill="#523e30"/>
<path d="M975 845L1030 838L1060 855L1000 860Z" fill="#2b2a28"/>
<ellipse cx="1007" cy="802" rx="4" ry="5" fill="#a0754f"/>
<ellipse cx="1017" cy="802" rx="4" ry="4" fill="#b8876c"/>
<path d="M1000 810Q1008 808 1014 810L1012 825L1002 825Z" fill="#333"/>
<path d="M1014 808H1024L1024 825H1012Z" fill="#bd8f74"/>
<path d="M1002 822L1012 822L1000 840L992 848L988 845ZM1012 824L1022 838L1032 848L1026 850L1010 838Z" fill="#2b2421"/>
<path d="M1018 825L1026 840L1024 850L1020 840L1012 826Z" fill="#4a2424"/>
<path d="M986 806L1002 810M1015 808L1038 806" stroke="#b78c6d" stroke-width="1.500"/>
</g></svg>
<g font-size="6.600" font-weight="700" fill="#444" text-anchor="middle">
<text x="1013.500" y="884.500" textLength="105">In our beautiful studio, learn from</text>
<text x="1013.500" y="894" textLength="105">our workshops, restore your body</text>
</g>

<!-- ============ RIVINGTON ============ -->
<rect x="1184" y="14" width="291" height="275" fill="#050a36"/>
<text x="1191" y="25" font-size="5" font-weight="700" fill="#e4e4ea">Rivington</text>
<text x="1191" y="31" font-size="3.400" fill="#a4a6b8" textLength="63">1 Example Street, Anytown, 17100 USA</text>
<g font-size="4.500" font-weight="700" fill="#cfd0da">
<text x="1360" y="28" fill="#c39a5f">Home</text><text x="1381" y="28">About</text><text x="1403" y="28">Services</text><text x="1430" y="28">Blog</text><text x="1448" y="28">Contact</text>
</g>
<svg x="1191" y="38" width="179" height="119" viewBox="1191 38 179 119"><g filter="url(#p)">
<rect x="1185" y="32" width="191" height="131" fill="#e4e0da"/>
<path d="M1185 32H1376V62L1270 68L1185 58Z" fill="#f1eee8"/>
<rect x="1185" y="70" width="36" height="35" fill="#cfcec9"/>
<rect x="1185" y="72" width="18" height="14" fill="#333"/>
<rect x="1205" y="75" width="28" height="30" fill="#c0c0bd"/>
<rect x="1263" y="66" width="113" height="46" fill="#c9cdb4"/>
<path d="M1265 95Q1280 85 1300 92Q1320 75 1340 92Q1355 84 1376 95V110H1265Z" fill="#5e8a3e"/>
<path d="M1280 66V112M1300 65V112M1320 65V112M1340 65V112" stroke="#7a7a70" stroke-width="1.500"/>
<path d="M1185 125L1270 110L1376 118V163H1185Z" fill="#d9d6cf"/>
<path d="M1185 140L1250 163H1185Z" fill="#b4611d"/>
<path d="M1340 148L1376 144V163H1345Z" fill="#b05a20"/>
<path d="M1235 107L1300 102L1300 115L1240 122Z" fill="#e9e5d9"/>
<rect x="1300" y="104" width="46" height="6" fill="#5c2a22"/>
<path d="M1326 122Q1345 108 1367 107L1368 146L1330 148Z" fill="#f0ece6"/>
<path d="M1221 110Q1232 105 1240 116L1258 124L1256 129L1243 137L1225 132Q1219 120 1221 110Z" fill="#13131a"/>
<path d="M1270 116Q1280 113 1290 116L1304 114L1308 124L1300 146H1276Q1268 130 1270 116Z" fill="#17171f"/>
<path d="M1200 110H1220L1213 122L1219 135H1200L1207 122Z" fill="#0f0f14"/>
<rect x="1185" y="90" width="14" height="15" fill="#444"/>
</g></svg>
<g>
<svg x="1378" y="38" width="29" height="29" viewBox="0 0 29 29"><rect width="29" height="29" fill="#ccc9c4"/><path d="M0 20L29 8V29H0Z" fill="#94765a"/><path d="M6 0L20 29" stroke="#eee" stroke-width="4"/></svg>
<svg x="1408.500" y="38" width="29" height="29" viewBox="0 0 29 29"><rect width="29" height="29" fill="#dfddd8"/><rect x="5" y="8" width="20" height="21" fill="#4f4d4a"/><rect y="10" width="29" height="3" fill="#333"/></svg>
<svg x="1439" y="38" width="29" height="29" viewBox="0 0 29 29"><rect width="29" height="29" fill="#c5c9c8"/><path d="M0 22L29 15V29H0Z" fill="#5a6a70"/><rect x="6" y="6" width="14" height="10" fill="#e6e6e2"/></svg>
<svg x="1378" y="68" width="29" height="29" viewBox="0 0 29 29"><rect width="29" height="29" fill="#d8d3cf"/><rect y="18" width="29" height="11" fill="#5a3a38"/><rect x="10" width="8" height="18" fill="#f2f2ee"/></svg>
<svg x="1408.500" y="68" width="29" height="29" viewBox="0 0 29 29"><rect width="29" height="29" fill="#cfcabb"/><path d="M5 8L25 5L28 14H5Z" fill="#7f8b54"/><rect x="15" y="18" width="10" height="9" fill="#1b1b1b"/></svg>
<svg x="1439" y="68" width="29" height="29" viewBox="0 0 29 29"><rect width="29" height="29" fill="#d5c8b5"/><path d="M0 29L29 12V29Z" fill="#a97e4a"/><rect x="3" y="6" width="8" height="14" fill="#594a3f"/></svg>
<svg x="1378" y="98" width="29" height="29.500" viewBox="0 0 29 29"><rect width="29" height="29" fill="#2f6db8"/><path d="M0 15L18 8L26 22H0Z" fill="#cdb68c"/><rect y="22" width="29" height="7" fill="#15806f"/><path d="M20 29V12L29 8V29Z" fill="#1d3a1e"/></svg>
<svg x="1408.500" y="98" width="29" height="29.500" viewBox="0 0 29 29"><rect width="29" height="29" fill="#7a736b"/><rect x="8" y="0" width="13" height="14" fill="#54504a"/><path d="M0 17H29V29H0Z" fill="#8d6e57"/></svg>
<svg x="1439" y="98" width="29" height="29.500" viewBox="0 0 29 29"><rect width="29" height="29" fill="#e0dace"/><rect x="0" y="12" width="9" height="7" fill="#111"/><rect x="18" y="4" width="8" height="20" fill="#cbbfa9"/></svg>
</g>
<circle cx="1257" cy="161" r="1.900" fill="#eee"/>
<g fill="#7b7d93"><circle cx="1263" cy="161" r="1.100"/><circle cx="1269" cy="161" r="1.100"/><circle cx="1274.700" cy="161" r="1.100"/><circle cx="1280.500" cy="161" r="1.100"/><circle cx="1286.300" cy="161" r="1.100"/><circle cx="1292" cy="161" r="1.100"/><circle cx="1298" cy="161" r="1.100"/><circle cx="1304" cy="161" r="1.100"/></g>
<g font-weight="700" fill="#dfe0e8" font-size="11.300">
<text x="1207" y="183" textLength="133" lengthAdjust="spacingAndGlyphs">Award-Winning Modern</text>
<text x="1207" y="195" textLength="150" lengthAdjust="spacingAndGlyphs">Mediterranean Style House</text>
</g>
<text x="1412" y="182" font-size="8.500" font-weight="700" fill="#dcdde6" textLength="40" lengthAdjust="spacingAndGlyphs">$700,000</text>
<text x="1207" y="207" font-size="4.300" fill="#b1b2c2" textLength="51">123 Any Street, NJ 12345</text>
<g stroke="#1c2148" stroke-width=".8"><path d="M1207 224.500H1250M1258 224.500H1301M1307 224.500H1350M1359 224.500H1401M1409 224.500H1452"/><path d="M1207 266H1250M1258 266H1301M1307 266H1350M1359 266H1401M1409 266H1452"/></g>
<g font-size="3.800" font-weight="700" fill="#c8c9d5" text-anchor="middle">
<text x="1228" y="238">Built Year</text><text x="1279" y="238">Bedrooms</text><text x="1329" y="238">Bathrooms</text><text x="1380" y="238">Stories</text><text x="1430" y="238">Sq. ft.</text>
</g>
<g font-size="12.500" font-weight="700" fill="#e4e5ec" text-anchor="middle">
<text x="1228" y="255.500">2017</text><text x="1279" y="255.500">5</text><text x="1329" y="255.500">3</text><text x="1380" y="255.500">2</text><text x="1430" y="255.500">3250</text>
</g>
<rect x="1184" y="289" width="291" height="93" fill="#fff"/>
<rect x="1184" y="288.500" width="291" height="1" fill="#9a9bad"/>
<text x="1207" y="321" font-size="8.500" font-weight="700" fill="#3c3c44" textLength="51" lengthAdjust="spacingAndGlyphs">Built for the</text>
<text x="1207" y="330.500" font-size="8.500" font-weight="700" fill="#3c3c44" textLength="29" lengthAdjust="spacingAndGlyphs">future.</text>
<g font-size="4.300" fill="#7c7c82">
<text x="1294" y="318" textLength="157">This 5 bedroom, 3 bathroom home has an estimated 4,500 total square</text>
<text x="1294" y="326" textLength="137">feet with nearly 3 acres &amp; its own access to the Haywards River.</text>
<text x="1294" y="341" textLength="155">Extensive upgrades and thorough maintenance have kept this home in</text>
<text x="1294" y="349" textLength="141">prime condition. Hardwood floors and new carpets create a very</text>
<text x="1294" y="357" textLength="55">comfortable living space.</text>
</g>

<svg x="1184" y="382" width="291" height="156" viewBox="1184 382 291 156"><g filter="url(#p)">
<rect x="1178" y="376" width="303" height="168" fill="#cfb26c"/>
<path d="M1178 376H1481V405L1300 412L1178 398Z" fill="#dcc28a"/>
<rect x="1178" y="425" width="76" height="55" fill="#c6aa66"/>
<rect x="1300" y="408" width="181" height="66" fill="#d8be80"/>
<path d="M1320 450Q1350 430 1380 445Q1410 425 1440 440Q1460 435 1481 445V475H1320Z" fill="#bfa55c" filter="url(#b1)"/>
<path d="M1325 410V475M1358 408V475M1390 408V475M1425 408V475" stroke="#bb9f60" stroke-width="1.500"/>
<path d="M1178 490L1300 470L1481 480V544H1178Z" fill="#d6bb78"/>
<path d="M1400 500L1481 470V530L1420 544Z" fill="#dcc388"/>
<path d="M1243 476Q1258 478 1268 488L1300 500L1305 510L1285 525L1250 520Q1240 500 1243 476Z" fill="#937a43"/>
<path d="M1320 490Q1335 486 1348 492L1380 498L1374 544H1330L1325 510Z" fill="#937a43"/>
<path d="M1208 480H1245L1232 500L1244 522H1210L1222 500Z" fill="#8f7840"/>
<path d="M1350 472L1420 477L1420 484L1350 480Z" fill="#9e8548"/>
</g></svg>
<g font-size="13.500" font-weight="700" fill="#f6f1e3" text-anchor="middle">
<text x="1329" y="434" textLength="82" lengthAdjust="spacingAndGlyphs">Luxurious &amp;</text>
<text x="1329" y="449" textLength="118" lengthAdjust="spacingAndGlyphs">Environmentally</text>
<text x="1329" y="463" textLength="122" lengthAdjust="spacingAndGlyphs">Conscious Living.</text>
</g>
<g font-size="4.600" fill="#f1e8d0" text-anchor="middle">
<text x="1329" y="481.500" textLength="170">Extensive upgrades and thorough maintenance have kept this home in prime</text>
<text x="1329" y="489" textLength="168">condition. Hardwood floors and new carpets create a very comfortable living</text>
<text x="1329" y="496.500" textLength="14">space.</text>
</g>

<rect x="1184" y="538" width="291" height="199" fill="#050933"/>
<svg x="1207" y="569" width="76" height="114" viewBox="1207 569 76 114"><g filter="url(#p)">
<rect x="1201" y="563" width="88" height="126" fill="#4e7e8a"/>
<rect x="1224" y="572" width="48" height="60" fill="#8fb4b2" filter="url(#b2)"/>
<rect x="1201" y="563" width="21" height="126" fill="#2f6072"/>
<rect x="1262" y="580" width="20" height="70" fill="#6f9aa0" filter="url(#b1)"/>
<ellipse cx="1244" cy="601" rx="11" ry="14" fill="#7a4e3a"/>
<path d="M1233 594Q1244 584 1255 594L1254 590Q1244 582 1234 590Z" fill="#9e8a80"/>
<path d="M1238 608Q1245 614 1251 607L1249 612Q1245 615 1240 612Z" fill="#efe5dc"/>
<path d="M1215 689L1213 640Q1220 622 1234 616L1256 624L1272 650L1275 665L1262 670L1260 689Z" fill="#14223e"/>
<path d="M1236 615L1250 622L1253 645L1244 630Z" fill="#cfd6e4"/>
<path d="M1240 642L1262 652L1272 650L1275 660L1258 660L1240 650Z" fill="#1f3355"/>
<path d="M1262 648L1275 655L1272 662L1260 658Z" fill="#916451"/>
<path d="M1256 665L1262 689H1258L1252 668Z" fill="#d5d9e2"/>
</g></svg>
<text x="1291" y="575" font-size="7" font-weight="700" fill="#dcdde6" textLength="46" lengthAdjust="spacingAndGlyphs">About Agent.</text>
<g font-size="4.300" fill="#c1c2cf">
<text x="1291" y="590.500" textLength="52">Juan Pérez is a Certified</text>
<text x="1291" y="598" textLength="72">Residential Specialist with over 12</text>
<text x="1291" y="606" textLength="66">years of experience of helping</text>
<text x="1291" y="613.500" textLength="59">local clients sell homes. His</text>
<text x="1291" y="621.500" textLength="61">achieved success due to his</text>
<text x="1291" y="629" textLength="76">commitment to providing beautiful</text>
<text x="1291" y="637" textLength="36">homes in Sussex.</text>
</g>
<text x="1375" y="575" font-size="7" font-weight="700" fill="#dcdde6" textLength="67" lengthAdjust="spacingAndGlyphs">Schedule a Private</text>
<text x="1375" y="583" font-size="7" font-weight="700" fill="#dcdde6" textLength="32" lengthAdjust="spacingAndGlyphs">Showing.</text>
<g font-size="4.300" fill="#c1c2cf">
<text x="1375" y="597.500" font-weight="700" fill="#d2d3dd" textLength="63">Rivington Real Estate Team:</text>
<text x="1375" y="605.500" fill="#a1916e" textLength="54">myemail@example.com</text>
<text x="1375" y="613" textLength="33">(123)-456-789</text>
<text x="1375" y="621" textLength="35">1 Example Street,</text>
<text x="1375" y="629" textLength="32">Anytown, 11100</text>
<text x="1375" y="637">USA</text>
</g>
<text x="1238" y="728" font-size="3.800" fill="#b0b1c0" textLength="60"><tspan font-weight="700" fill="#d5d6e0">Rivington</tspan>, Blog at WordPress.com</text>
<rect x="1397" y="724" width="5" height="5" rx=".6" fill="#c9cad6"/>
<path d="M1406 725Q1409 727 1411 725L1410.500 727.500Q1408 730 1406 729Q1408 728.500 1408.500 728Q1406.500 727 1406 725Z" fill="#c9cad6"/>
<rect x="1415" y="724" width="5" height="5" rx="1" fill="none" stroke="#a5a6b5" stroke-width=".7"/>

<!-- ============ DALSTON ============ -->
<rect x="1587" y="193" width="249" height="627" fill="#fff"/>
<text x="1657" y="203.500" font-size="3.200" fill="#6f9ba5" textLength="48">Home  About  Blog  Contact</text>
<text class="s" x="1593" y="218" font-size="6.300" font-weight="700" fill="#333" textLength="41">Dalston Studio</text>
<g font-size="5.900" fill="#444">
<text class="s" x="1657" y="217.500" textLength="132">A ground-breaking illustration agency in Portland,</text>
<text class="s" x="1657" y="225.500" textLength="134">Oregon founded in 2010 by Greg Dalston. Working</text>
<text class="s" x="1657" y="233.500" textLength="148">primarily in print and web he has a truly unique drawing</text>
<text class="s" x="1657" y="241.500" textLength="71">style great for any industry.</text>
</g>
<rect x="1587" y="256" width="249" height="109" fill="#191919"/>
<path d="M1720 268Q1738 266 1758 276L1771 279Q1778 292 1774 314Q1768 332 1744 333Q1730 350 1706 355Q1684 352 1682 336Q1688 322 1698 316Q1686 300 1696 282Q1706 272 1720 268Z" fill="#f2e9d9"/>
<ellipse cx="1747" cy="287" rx="6.500" ry="6.500" fill="#e25a4e"/>
<path d="M1738 292L1758 290L1756 310L1745 308Z" fill="none" stroke="#999" stroke-width=".8"/>
<rect x="1765" y="280" width="3" height="32" fill="#ddc3b0"/>
<circle cx="1719" cy="279" r="4" fill="#2d2a50"/>
<path d="M1714 291L1725 293L1740 283L1744 287L1725 298L1734 315L1742 322L1726 327L1718 312Z" fill="#3745b2"/>
<path d="M1727 326L1744 322L1745 327L1732 332L1716 342L1714 337Z" fill="#d5805f"/>
<rect x="1587" y="365" width="145" height="110" fill="#6354a8"/>
<rect x="1616" y="440" width="90" height="5" fill="#7668b7"/>
<g fill="#a79ec9"><ellipse cx="1680" cy="395" rx="11" ry="12"/><ellipse cx="1700" cy="395" rx="12" ry="13"/></g>
<ellipse cx="1690" cy="385" rx="11" ry="13" fill="#bcb3d4"/>
<path d="M1612 407Q1616 396 1622 398Q1630 398 1632 405L1628 407Z" fill="#fff"/>
<path d="M1694 410Q1702 401 1710 405L1710 410Z" fill="#fff"/>
<circle cx="1638" cy="393" r="5" fill="#2a2238"/>
<path d="M1632 400L1652 406L1660 411L1658 414L1648 411L1646 418H1630Z" fill="#e6b8d1"/>
<path d="M1630 418H1645L1644 452L1648 458H1642L1637 432L1630 458H1626L1628 440Z" fill="#241a33"/>
<path d="M1656 410L1685 417L1656 415Z" fill="#1c1728"/>
<path d="M1668 412L1690 408M1680 430L1690 446" stroke="#2b2738" stroke-width="1.500"/>
<path d="M1664 438H1686V456Q1676 460 1667 456Z" fill="#3a2f85"/>
<ellipse cx="1675" cy="433" rx="6" ry="4" fill="#e4e1ee"/>
<rect x="1732" y="365" width="104" height="110" fill="#d6d6d8"/>
<path d="M1747 420Q1760 385 1800 376Q1818 380 1836 392V460L1810 463Q1780 460 1750 458Q1745 440 1747 420Z" fill="#2a2135"/>
<ellipse cx="1757" cy="420" rx="10" ry="12" fill="#e5e1d5"/>
<path d="M1755 412L1785 410L1785 435L1770 428L1750 422Z" fill="#e3ddcf"/>
<circle cx="1805" cy="413" r="5.500" fill="#e5a940"/>
<path d="M1804 396L1824 380" stroke="#dd6844" stroke-width="3"/>
<path d="M1795 465Q1800 450 1814 452Q1825 460 1830 465Z" fill="#4ca7a3"/>
<ellipse cx="1778" cy="390" rx="7" ry="6" fill="#3a3b72"/>
<path d="M1825 400Q1836 395 1836 400V420L1825 415Z" fill="#cfd5db"/>
<path d="M1815 425L1836 410V455L1820 452Z" fill="#d7d3cc"/>

<!-- white row art -->
<path d="M1674 560Q1672 505 1688 497Q1720 492 1740 489Q1765 485 1775 497Q1790 510 1792 535Q1790 555 1782 564Z" fill="#f7ebdf"/>
<rect x="1682" y="512" width="17" height="18" fill="#fbf5ec" stroke="#e7d6c6" stroke-width=".8"/>
<rect x="1760" y="511" width="17" height="18" fill="#f2e3d6" stroke="#e7d6c6" stroke-width=".8"/>
<rect x="1712" y="501" width="36" height="38" fill="#fff" stroke="#d95c55" stroke-width="2"/>
<path d="M1673 551H1790" stroke="#eac4b8" stroke-width="1.200"/>
<circle cx="1711" cy="510" r="3" fill="#1f2030"/>
<path d="M1703 517H1718L1724 521L1716 530H1705L1702 525Z" fill="#3346b2"/>
<path d="M1708 530H1718L1720 559H1716L1713 540L1711 559H1708Z" fill="#1e1e2b"/>
<rect x="1587" y="585" width="145" height="109" fill="#f6e9df"/>
<path d="M1600 679V655Q1602 630 1618 618Q1640 600 1665 612Q1680 620 1686 635Q1710 640 1719 662L1721 679Z" fill="#3f7dca"/>
<ellipse cx="1636" cy="629" rx="20" ry="10" fill="#f5e8dc"/>
<circle cx="1625" cy="631" r="3.500" fill="#d8734c"/>
<path d="M1630 634L1648 628L1650 634Z" fill="#e49a5e"/>
<path d="M1635 625L1640 630L1632 632Z" fill="#3b3f95"/>
<rect x="1615" y="656" width="30" height="22" fill="#2f67ad"/>
<path d="M1624 666H1655L1658 678H1624Z" fill="#2f6cb3"/>
<rect x="1690" y="655" width="16" height="23" fill="#3570b4"/>
<circle cx="1672" cy="626" r="3" fill="#2b2338"/>
<path d="M1668 631H1676L1677 645L1687 659L1684 661L1674 650L1676 658L1674 661L1671 650Z" fill="#2e2a3c"/>
<rect x="1732" y="585" width="104" height="109" fill="#a6f7b4"/>
<ellipse cx="1790" cy="632" rx="6" ry="6" fill="#f3dc8f"/>
<path d="M1784 631H1800V636H1784Z" fill="#fff"/>
<circle cx="1820" cy="636" r="9" fill="none" stroke="#b07b55" stroke-width="1.500"/>
<circle cx="1830" cy="666" r="8.500" fill="none" stroke="#b07b55" stroke-width="1.500"/>
<path d="M1804 643L1822 652L1834 656L1820 660Z" fill="#2f9270"/>
<circle cx="1780" cy="661" r="3" fill="#1d1d20"/>
<path d="M1780 665L1795 664L1808 672H1790Z" fill="#e35a40"/>
<path d="M1790 642L1798 655L1802 668L1808 672L1812 660L1802 650Z" fill="#d6845c"/>
<path d="M1758 675L1782 670L1785 674H1758Z" fill="#d6845c"/>
<rect x="1756" y="674" width="80" height="1.500" fill="#4bb57e"/>
<rect x="1684" y="694" width="96" height="110" fill="#e2554f"/>
<path d="M1703 740Q1712 725 1735 733Q1750 720 1765 726Q1778 735 1766 750Q1775 765 1755 770Q1725 775 1708 768Q1690 755 1703 740Z" fill="#f7ebdc"/>
<path d="M1706 761L1733 757L1735 766L1706 769ZM1722 750L1748 746L1750 755L1724 758Z" fill="#e9704b"/>
<path d="M1736 738L1765 737L1762 747L1738 745Z" fill="#e8ab4d"/>
<path d="M1748 728Q1758 722 1764 735L1756 737L1748 734Z" fill="#2a2238"/>
<ellipse cx="1754" cy="730" rx="6" ry="4" fill="#e66d6c"/>
<rect x="1750" y="758" width="8" height="14" rx="4" fill="#6cc69a"/>
<circle cx="1738" cy="766" r="3" fill="#3f7dca"/>
<path d="M1762 742L1768 745L1762 750Z" fill="#3a6fc4"/>
<circle cx="1700" cy="757" r="2.500" fill="#e2554f"/>
<rect x="1780" y="694" width="56" height="110" fill="#f6e9df"/>
<path d="M1800 740Q1815 722 1836 724V777L1820 781Q1805 775 1800 760Z" fill="#ea4f4d"/>
<circle cx="1834" cy="748" r="18" fill="#f6efe4" stroke="#1f1d24" stroke-width="2.500"/>
<rect x="1828" y="724" width="8" height="4" fill="#222"/>
<path d="M1814 742L1836 752M1824 750L1818 755" stroke="#3b47b0" stroke-width="3"/>
<path d="M1830 742H1836V762H1830Z" fill="#2a2238"/>
<path d="M1813 772H1836" stroke="#1f1d24" stroke-width="2"/>
<!-- plant + building -->
<path d="M1622 722L1655 720L1655 713L1660 723L1665 723L1670 722L1672 745L1670 769H1630L1622 770Z" fill="#3874c2"/>
<path d="M1636 726V737H1650V726Z" fill="#f3f3ee"/>
<rect x="1656" y="722" width="5" height="24" fill="#1f4b8e"/>
<path d="M1670 723Q1675 722 1678 730L1682 768H1671Z" fill="#dfd6ca"/>
<rect x="1625" y="755" width="44" height="16" fill="#f7e8c9" stroke="#d6c3a1" stroke-width=".6"/>
<path d="M1630 760Q1640 756 1650 762L1642 770Z" fill="#e8b53e"/>
<path d="M1600 775L1678 776" stroke="#ecd9c5" stroke-width="2"/>
<ellipse cx="1610" cy="770" rx="7" ry="6" fill="#e6ad4a"/>
<path d="M1608 765V730" stroke="#2d8f76" stroke-width="1"/>
<g fill="#34c29a"><ellipse cx="1602" cy="735" rx="5" ry="3"/><ellipse cx="1616" cy="733" rx="5" ry="3"/><ellipse cx="1602" cy="748" rx="5" ry="3"/><ellipse cx="1618" cy="748" rx="5" ry="3"/><ellipse cx="1603" cy="758" rx="4" ry="2.500"/><ellipse cx="1617" cy="760" rx="5" ry="3"/></g>
<text x="1657" y="814" font-size="3" fill="#9a9a9a" textLength="52"><tspan fill="#555" font-weight="700">Dalston Studio</tspan> Proudly powered by WordPress</text>
</svg>
</body>
</html>
